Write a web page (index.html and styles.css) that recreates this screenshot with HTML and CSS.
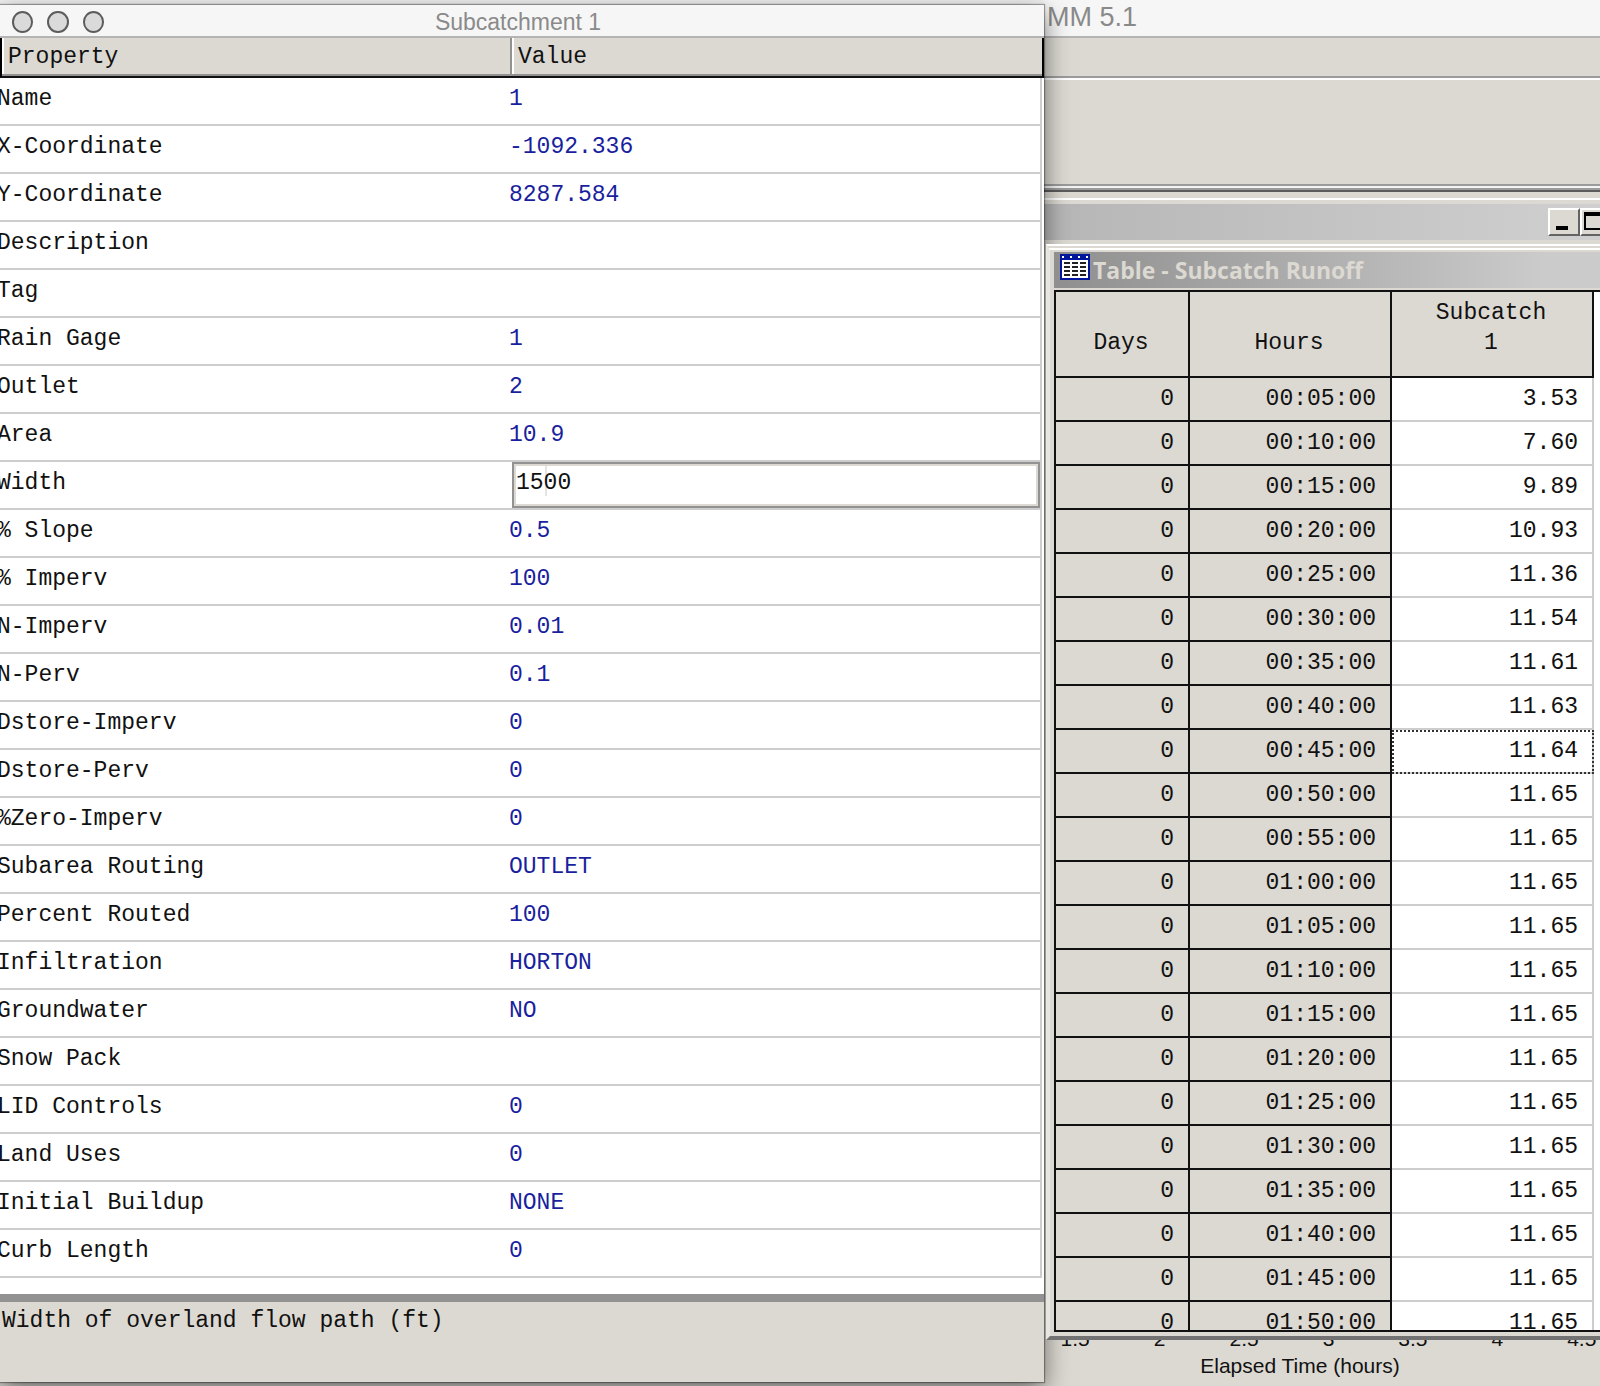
FILE: index.html
```html
<!DOCTYPE html>
<html lang="en">
<head>
<meta charset="utf-8">
<title>SWMM 5.1</title>
<link rel="stylesheet" href="styles.css">
</head>
<body>
<div class="desktop">
<section class="dialog">
  <header class="dialog-title">
    <div class="lights"><button aria-label="Close"></button><button aria-label="Minimize"></button><button aria-label="Zoom"></button></div>
    <h1>Subcatchment 1</h1>
  </header>
  <div class="properties">
  <table class="property-table">
    <colgroup><col class="name-col"><col></colgroup>
    <thead><tr><th>Property</th><th>Value</th></tr></thead>
    <tbody>
      <tr><td>Name</td><td>1</td></tr>
      <tr><td>X-Coordinate</td><td>-1092.336</td></tr>
      <tr><td>Y-Coordinate</td><td>8287.584</td></tr>
      <tr><td>Description</td><td></td></tr>
      <tr><td>Tag</td><td></td></tr>
      <tr><td>Rain Gage</td><td>1</td></tr>
      <tr><td>Outlet</td><td>2</td></tr>
      <tr><td>Area</td><td>10.9</td></tr>
      <tr><td><label for="width">Width</label></td><td class="editing"><input id="width" type="text" value="1500"></td></tr>
      <tr><td>% Slope</td><td>0.5</td></tr>
      <tr><td>% Imperv</td><td>100</td></tr>
      <tr><td>N-Imperv</td><td>0.01</td></tr>
      <tr><td>N-Perv</td><td>0.1</td></tr>
      <tr><td>Dstore-Imperv</td><td>0</td></tr>
      <tr><td>Dstore-Perv</td><td>0</td></tr>
      <tr><td>%Zero-Imperv</td><td>0</td></tr>
      <tr><td>Subarea Routing</td><td>OUTLET</td></tr>
      <tr><td>Percent Routed</td><td>100</td></tr>
      <tr><td>Infiltration</td><td>HORTON</td></tr>
      <tr><td>Groundwater</td><td>NO</td></tr>
      <tr><td>Snow Pack</td><td></td></tr>
      <tr><td>LID Controls</td><td>0</td></tr>
      <tr><td>Land Uses</td><td>0</td></tr>
      <tr><td>Initial Buildup</td><td>NONE</td></tr>
      <tr><td>Curb Length</td><td>0</td></tr>
    </tbody>
  </table>
  </div>
  <footer class="hint">Width of overland flow path (ft)</footer>
</section>

<main class="app">
  <header class="app-title">MM 5.1</header>
  <div class="menu-bar"></div>
  <div class="tool-bar"></div>
  <div class="chart-title">
    <button aria-label="Minimize"><svg width="28" height="24" viewBox="0 0 28 24"><rect x="6" y="16" width="12" height="4"/></svg></button>
    <button aria-label="Maximize"><svg width="28" height="24" viewBox="0 0 28 24"><path d="M2 2h20v18H2zM4 6v12h16V6z" fill-rule="evenodd"/></svg></button>
  </div>
  <section class="table-window">
    <header class="table-title">
      <svg width="30" height="26" viewBox="0 0 30 26">
        <path fill="#00149c" d="M0 0h30v26H0z"/>
        <path fill="#fff" d="M2 6h26v18H2zM2 2h2v2H2zM10 2h2v2h-2zM18 2h2v2h-2zM26 2h2v2h-2z"/>
        <path stroke="#222" stroke-width="2" d="M4 9h6M12 9h6M20 9h6M4 13h6M12 13h6M20 13h6M4 17h6M12 17h6M20 17h6M4 21h6M12 21h6M20 21h6"/>
      </svg>
      <h2>Table - Subcatch Runoff</h2>
    </header>
    <div class="table-view">
    <table class="runoff">
      <colgroup><col class="days-col"><col class="hours-col"><col></colgroup>
      <thead><tr><th><br>Days</th><th><br>Hours</th><th>Subcatch<br>1</th></tr></thead>
      <tbody>
        <tr><td>0</td><td>00:05:00</td><td>3.53</td></tr>
        <tr><td>0</td><td>00:10:00</td><td>7.60</td></tr>
        <tr><td>0</td><td>00:15:00</td><td>9.89</td></tr>
        <tr><td>0</td><td>00:20:00</td><td>10.93</td></tr>
        <tr><td>0</td><td>00:25:00</td><td>11.36</td></tr>
        <tr><td>0</td><td>00:30:00</td><td>11.54</td></tr>
        <tr><td>0</td><td>00:35:00</td><td>11.61</td></tr>
        <tr><td>0</td><td>00:40:00</td><td>11.63</td></tr>
        <tr><td>0</td><td>00:45:00</td><td class="selected">11.64</td></tr>
        <tr><td>0</td><td>00:50:00</td><td>11.65</td></tr>
        <tr><td>0</td><td>00:55:00</td><td>11.65</td></tr>
        <tr><td>0</td><td>01:00:00</td><td>11.65</td></tr>
        <tr><td>0</td><td>01:05:00</td><td>11.65</td></tr>
        <tr><td>0</td><td>01:10:00</td><td>11.65</td></tr>
        <tr><td>0</td><td>01:15:00</td><td>11.65</td></tr>
        <tr><td>0</td><td>01:20:00</td><td>11.65</td></tr>
        <tr><td>0</td><td>01:25:00</td><td>11.65</td></tr>
        <tr><td>0</td><td>01:30:00</td><td>11.65</td></tr>
        <tr><td>0</td><td>01:35:00</td><td>11.65</td></tr>
        <tr><td>0</td><td>01:40:00</td><td>11.65</td></tr>
        <tr><td>0</td><td>01:45:00</td><td>11.65</td></tr>
        <tr><td>0</td><td>01:50:00</td><td>11.65</td></tr>
      </tbody>
    </table>
    </div>
  </section>
  <footer class="axis">
    <div class="ticks"><span>1.5</span><span>2</span><span>2.5</span><span>3</span><span>3.5</span><span>4</span><span>4.5</span></div>
    <div class="axis-label">Elapsed Time (hours)</div>
  </footer>
</main>
</div>
</body>
</html>
```
FILE: styles.css
```css
* { box-sizing: border-box; }

:root {
  --face: #dcd9d2;
  --line: #cdcdcd;
  --ink: #111;
  --navy: #1a1f9e;
}

body {
  margin: 0;
  background: var(--face);
  color: var(--ink);
  font-family: "Liberation Mono", "Courier New", monospace;
  font-size: 23px;
  line-height: 30px;
}

h1, h2 { margin: 0; font: inherit; }
button { margin: 0; padding: 0; border: 0; }
svg { display: block; }
table { width: 100%; table-layout: fixed; border-collapse: separate; border-spacing: 0; }
th { font-weight: normal; }

.desktop {
  display: grid;
  grid-template-columns: 261fr 139fr;
  height: 100vh;
  overflow: hidden;
  background: linear-gradient(#f2f2f2 50%, var(--face) 50%);
}

/* Property editor */
.dialog {
  position: relative;
  z-index: 1;
  display: flex;
  flex-direction: column;
  min-width: 0;
  min-height: 0;
  margin: 5px 0 4px;
  background: #fff;
  box-shadow: 0 0 1px 1px #0005, 0 8px 24px #0008;
}

.dialog-title {
  display: grid;
  grid-template-columns: 104px 1fr 112px;
  align-items: center;
  flex: none;
  height: 33px;
  padding-top: 2px;
  border-bottom: 2px solid #b4b4b4;
  background: #f6f6f6;
  color: #8a8a8a;
  font-family: "Liberation Sans", Arial, sans-serif;
  font-size: 23px;
  text-align: center;
}

.lights { display: flex; gap: 14px; padding-left: 12px; }
.lights button {
  width: 22px;
  height: 22px;
  border: 2px solid #5c5c5c;
  border-radius: 50%;
  background: #dadada;
}

.properties {
  flex: 1;
  min-height: 0;
  overflow: hidden;
  border-bottom: 8px solid #929292;
}

.name-col { width: 508px; }

.property-table th {
  height: 40px;
  padding: 0 0 0 10px;
  border-bottom: 2px solid #111;
  box-shadow: inset 0 -2px #929292;
  background: var(--face);
  text-align: left;
}
.property-table th:first-child {
  padding-left: 6px;
  border-left: 2px solid #000;
  background: linear-gradient(to right, #fff 2px, var(--face) 2px);
}
.property-table th:last-child {
  border-right: 2px solid #000;
  background: linear-gradient(to right, var(--face) 2px, #929292 2px 4px, #fff 4px 6px, var(--face) 6px);
}

.property-table td {
  height: 48px;
  padding: 0 0 4px;
  border-bottom: 2px solid var(--line);
  white-space: nowrap;
}
.property-table td:first-child { overflow: hidden; text-indent: -3px; }
.property-table td:last-child {
  padding: 0 0 6px 1px;
  border-bottom: 0;
  color: var(--navy);
  background:
    linear-gradient(var(--line), var(--line)) right 2px top / 2px 100% no-repeat,
    linear-gradient(var(--line), var(--line)) left bottom / calc(100% - 2px) 2px no-repeat;
}
.property-table .editing:last-child { padding: 0 4px 2px; }
.property-table label { display: block; }

.editing input {
  display: block;
  width: 100%;
  height: 46px;
  padding: 0 0 4px;
  border: 2px solid #929292;
  outline: 2px solid #dcd9d2;
  outline-offset: -4px;
  border-radius: 0;
  background: linear-gradient(#e4e4e4, #e4e4e4) 31px 2px / 2px 30px no-repeat #fff;
  color: var(--ink);
  font: inherit;
  text-indent: 2px;
}

.hint {
  flex: none;
  height: 80px;
  padding: 4px 2px;
  background: var(--face);
}

/* Application window */
.app {
  display: flex;
  flex-direction: column;
  min-width: 0;
  min-height: 0;
  background: var(--face);
}

.app-title {
  flex: none;
  height: 38px;
  padding: 2px 0 0 3px;
  border-bottom: 2px solid #b4b4b4;
  background: #f6f6f6;
  color: #8a8a8a;
  font-family: "Liberation Sans", Arial, sans-serif;
  font-size: 27px;
}

.menu-bar {
  flex: none;
  height: 42px;
  border-bottom: 2px solid #fff;
  box-shadow: inset 0 -2px #9b9b9b;
}

.tool-bar {
  flex: none;
  height: 112px;
  border-bottom: 2px solid #5c5c5c;
  box-shadow: inset 0 -2px #9b9b9b, inset 0 -4px #f2f4f2, inset 0 -6px #9b9b9b;
}

.chart-title {
  display: flex;
  flex: none;
  justify-content: flex-end;
  height: 52px;
  padding: 4px 0;
  margin-right: -12px;
  border-top: 12px solid var(--face);
  border-bottom: 4px solid var(--face);
  background: linear-gradient(to right, #b6b6b6, #d0d0d0);
  border-image: linear-gradient(var(--face) 6px, #fff 6px 8px, var(--face) 8px) 12 0 4 0;
}
.chart-title button {
  width: 32px;
  height: 28px;
  border: 2px solid;
  border-color: #fff #636363 #636363 #fff;
  background: var(--face);
}

.table-window {
  position: relative;
  z-index: 2;
  display: flex;
  flex: 1;
  flex-direction: column;
  min-height: 0;
  margin: 0 0 0 2px;
  padding: 2px 0 4px 4px;
  border-left: 4px solid #e8e6e2;
  border-top: 6px double #fff;
  border-bottom: 4px solid #727272;
  background: var(--face);
}

.table-title {
  display: flex;
  flex: none;
  gap: 3px;
  height: 36px;
  padding: 2px 6px;
  margin-bottom: 2px;
  background: linear-gradient(to right, #8f8f8f, #cbcbcb 90%);
  color: var(--face);
  font-family: "Open Sans", "Noto Sans", sans-serif;
  font-size: 23px;
  font-weight: bold;
  line-height: 32px;
}
.table-title h2 { white-space: nowrap; }

.table-view {
  flex: 1;
  min-height: 0;
  padding-right: 6px;
  overflow: hidden;
  border: 2px solid #111;
  border-right: 0;
  background: #fff;
}

.days-col { width: 134px; }
.hours-col { width: 202px; }

.runoff th {
  height: 86px;
  padding: 6px 2px 18px 0;
  border-right: 2px solid #111;
  border-bottom: 2px solid #111;
  background: var(--face);
}
.runoff td {
  height: 44px;
  padding: 0 14px 0 0;
  border-right: 2px solid #111;
  border-bottom: 2px solid #111;
  background: var(--face);
  text-align: right;
}
.runoff td:last-child { border-color: var(--line); background: #fff; }
.runoff .selected { outline: 2px dotted #333; outline-offset: -2px; }

/* Chart axis behind the table window */
.axis {
  flex: none;
  height: 46px;
  overflow: hidden;
  font-family: "Liberation Sans", Arial, sans-serif;
  font-size: 21px;
}
.ticks {
  display: grid;
  grid-template-columns: repeat(7, 1fr);
  align-content: end;
  height: 7px;
  margin: 0 -24px 0 -11px;
  overflow: hidden;
  line-height: 16px;
  text-align: center;
}
.axis-label { padding: 4px 44px 0 0; text-align: center; }
```
